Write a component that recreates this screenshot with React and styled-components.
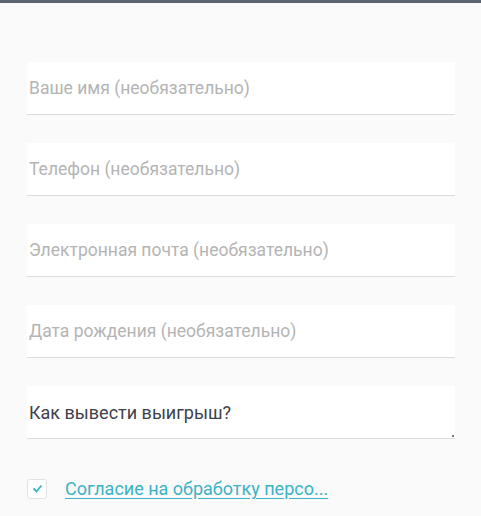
import styled, { createGlobalStyle } from 'styled-components'

const Global = createGlobalStyle`
  body {
    margin: 0;
    background: #fafafa;
    font-family: Roboto, "Noto Sans", sans-serif;
  }
`

const Page = styled.div`
  border-top: 3px solid #5c6373;
  padding: 59px 26px 0 27px;
  height: 513px;
  box-sizing: border-box;
`

const Form = styled.div`
  display: flex;
  flex-direction: column;
  gap: 28px;
`

const Field = styled.div`
  position: relative;
  height: 52px;
  background: #ffffff;
  border-bottom: 1px solid #dcdcdc;
  display: flex;
  align-items: center;
  padding-left: 2px;
  font-size: ${(p) => (p.filled ? '18px' : '17.5px')};
  color: ${(p) => (p.filled ? '#3d414b' : '#b4b4b4')};
`

const Grip = styled.span`
  position: absolute;
  right: 1px;
  bottom: 1px;
  width: 2px;
  height: 2px;
  background: #777;
`

const Consent = styled.label`
  display: flex;
  align-items: center;
  gap: 18px;
  margin-top: 39px;
`

const Box = styled.span`
  width: 18px;
  height: 18px;
  border: 1px solid #e2e2e2;
  border-radius: 3px;
  background: #fff;
  display: flex;
  align-items: center;
  justify-content: center;
`

const Link = styled.a`
  font-size: 18px;
  color: #3ab3c6;
  text-decoration: underline;
  text-underline-offset: 3px;
`

const fields = [
  'Ваше имя (необязательно)',
  'Телефон (необязательно)',
  'Электронная почта (необязательно)',
  'Дата рождения (необязательно)',
]

export default function App() {
  return (
    <>
      <Global />
      <Page>
        <Form>
          {fields.map((f) => (
            <Field key={f}>{f}</Field>
          ))}
          <Field filled>
            Как вывести выигрыш?
            <Grip />
          </Field>
        </Form>
        <Consent>
          <Box>
            <svg width="11" height="9" viewBox="0 0 11 9">
              <path d="M1.5 4.5l3 3 5-6" fill="none" stroke="#3ab3c6" strokeWidth="1.8" />
            </svg>
          </Box>
          <Link>Согласие на обработку персо...</Link>
        </Consent>
      </Page>
    </>
  )
}
